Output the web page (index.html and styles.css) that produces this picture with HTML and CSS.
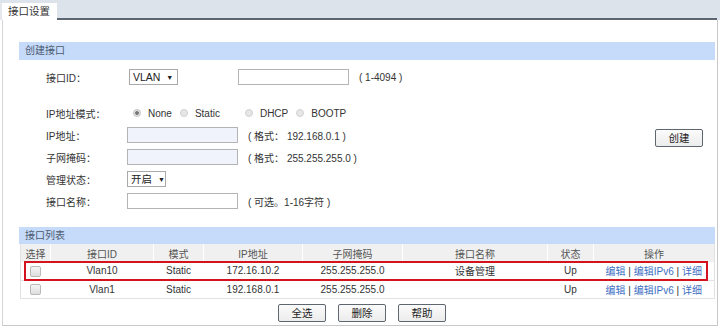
FILE: index.html
```html
<!DOCTYPE html>
<html lang="zh-CN">
<head>
  <meta charset="UTF-8" />
  <title>接口设置</title>
  <link rel="stylesheet" href="styles.css">
</head>
<body>
  <div class="tabbar">
    <div class="tab">接口设置</div>
    <div class="tab-rest"></div>
  </div>

  <div class="panel">
    <div class="section-title">创建接口</div>

    <div class="form">
      <div class="row row-first">
        <label class="label label-wide">接口ID：</label>
        <div class="select sel-vlan">VLAN <span class="arrow">▼</span></div>
        <input class="text text-id" type="text">
        <span class="hint">( 1-4094 )</span>
      </div>
      <div class="row">
        <label class="label">IP地址模式：</label>
        <div class="radios">
          <span class="radio checked"></span><span class="radio-text">None</span>
          <span class="radio"></span><span class="radio-text r-static">Static</span>
          <span class="radio"></span><span class="radio-text">DHCP</span>
          <span class="radio"></span><span class="radio-text">BOOTP</span>
        </div>
      </div>
      <div class="row">
        <label class="label">IP地址：</label>
        <input class="text text-fill" type="text">
        <span class="hint">( 格式： 192.168.0.1 )</span>
        <button class="btn btn-create">创建</button>
      </div>
      <div class="row">
        <label class="label">子网掩码：</label>
        <input class="text text-fill" type="text">
        <span class="hint">( 格式： 255.255.255.0 )</span>
      </div>
      <div class="row">
        <label class="label">管理状态：</label>
        <div class="select sel-state">开启 <span class="arrow">▼</span></div>
      </div>
      <div class="row">
        <label class="label">接口名称：</label>
        <input class="text" type="text">
        <span class="hint">( 可选。1-16字符 )</span>
      </div>
    </div>

    <div class="section-title section-list">接口列表</div>

    <div class="table-wrap">
      <table class="list">
        <thead>
          <tr>
            <th class="c-sel">选择</th>
            <th class="c-id">接口ID</th>
            <th class="c-mode">模式</th>
            <th class="c-ip">IP地址</th>
            <th class="c-mask">子网掩码</th>
            <th class="c-name">接口名称</th>
            <th class="c-state">状态</th>
            <th class="c-op">操作</th>
          </tr>
        </thead>
        <tbody>
          <tr>
            <td><span class="check"></span></td>
            <td>Vlan10</td>
            <td>Static</td>
            <td>172.16.10.2</td>
            <td>255.255.255.0</td>
            <td>设备管理</td>
            <td>Up</td>
            <td class="ops"><a href="#">编辑</a> | <a href="#">编辑IPv6</a> | <a href="#">详细</a></td>
          </tr>
          <tr>
            <td><span class="check"></span></td>
            <td>Vlan1</td>
            <td>Static</td>
            <td>192.168.0.1</td>
            <td>255.255.255.0</td>
            <td></td>
            <td>Up</td>
            <td class="ops"><a href="#">编辑</a> | <a href="#">编辑IPv6</a> | <a href="#">详细</a></td>
          </tr>
        </tbody>
      </table>
      <div class="highlight"></div>
    </div>

    <div class="actions">
      <button class="btn">全选</button>
      <button class="btn">删除</button>
      <button class="btn">帮助</button>
    </div>
  </div>
</body>
</html>
```

FILE: styles.css
```css
* { box-sizing: border-box; }
body {
  margin: 0;
  width: 720px;
  background: #fff;
  color: #333;
  font-family: "Liberation Sans", "Noto Sans CJK SC", sans-serif;
  font-size: 10px;
}
.tabbar {
  display: flex;
  align-items: flex-end;
  height: 20px;
  background: #dde3ea;
}
.tab {
  width: 57px;
  height: 17px;
  padding: 1px 0 0 6px;
  background: #fff;
  border-left: 2px solid #e4e8ec;
  font-size: 10.5px;
  line-height: 15px;
  color: #333;
}
.tab-rest {
  flex: 1;
  height: 2px;
  margin-right: 3px;
  background: #5b6670;
}
.panel {
  margin: 0 2px 0 2px;
  width: 716px;
  height: 306px;
  padding: 22px 2px 0 16px;
  border-left: 1px solid #d4d4d4;
  border-right: 1px solid #c8c8c8;
  border-bottom: 1px solid #c8c8c8;
}
.section-title {
  height: 18px;
  padding-left: 6px;
  background: #c6dafa;
  line-height: 18px;
  font-size: 10px;
  color: #4a5a70;
}
.form {
  padding-left: 27px;
  padding-right: 12px;
}
.row {
  display: flex;
  align-items: center;
  height: 22px;
}
.row-first {
  height: 16px;
  margin: 9px 0 17px;
}
.label {
  width: 81px;
  font-size: 10px;
  color: #333;
}
.label-wide { width: 83px; }
.select {
  height: 16px;
  padding: 0 0 0 3px;
  border: 1px solid #a9a9a9;
  background: #fff;
  line-height: 14px;
  font-size: 10.5px;
  color: #222;
  white-space: nowrap;
}
.arrow {
  font-size: 7px;
  margin-left: 3px;
  vertical-align: 1px;
}
.sel-vlan { width: 49px; }
.sel-state { width: 39px; }
.text {
  width: 111px;
  height: 16px;
  border: 1px solid #b4b4b4;
  background: #fff;
  padding: 0;
}
.text-id { margin-left: 60px; }
.text-fill { background: #f0f3fb; }
.hint {
  margin-left: 10px;
  font-size: 10px;
  color: #333;
  white-space: nowrap;
}
.radios {
  display: flex;
  align-items: center;
  padding-left: 6px;
}
.radio {
  width: 8px;
  height: 8px;
  border-radius: 50%;
  border: 1px solid #d2d2d2;
  background: #e6e6e6;
  margin-right: 7px;
}
.radio.checked {
  background: radial-gradient(circle, #777 0 1.5px, #e0e0e0 2.2px);
  border-color: #c4c4c4;
}
.radio-text {
  margin-right: 8px;
  font-size: 10px;
}
.r-static { margin-right: 25px; }
.btn {
  height: 18px;
  width: 48px;
  padding: 0;
  border: 1px solid #5e6770;
  border-radius: 2px;
  background: linear-gradient(#fbfbfb, #ececec);
  font-family: "Noto Sans CJK SC", sans-serif;
  font-size: 10.5px;
  color: #222;
  line-height: 16px;
}
.btn-create {
  margin-left: auto;
  margin-top: 6px;
}
.section-list { margin-top: 15px; height: 17px; line-height: 17px; }
.table-wrap {
  position: relative;
  margin-left: 1px;
}
.list {
  width: 100%;
  border-collapse: collapse;
  table-layout: fixed;
  border-left: 1px solid #e2e2e2;
  border-right: 1px solid #e2e2e2;
}
.list th {
  height: 18px;
  padding: 0;
  background: #f0f0f0;
  border-right: 1px solid #fff;
  font-weight: normal;
  color: #555;
  font-size: 10px;
}
.list th:last-child { border-right: none; }
.list td {
  height: 18px;
  padding: 0;
  text-align: center;
  border-bottom: 1px solid #e2e2e2;
  font-size: 10px;
  color: #333;
  white-space: nowrap;
}
.c-sel { width: 30px; }
.c-id { width: 103px; }
.c-mode { width: 50px; }
.c-ip { width: 99px; }
.c-mask { width: 100px; }
.c-name { width: 145px; }
.c-state { width: 46px; }
.check {
  display: inline-block;
  width: 11px;
  height: 11px;
  border: 1px solid #b9b9b9;
  border-radius: 2px;
  background: linear-gradient(#f4f4f4, #dedede);
  vertical-align: middle;
}
.ops a {
  color: #3d6fc4;
  text-decoration: none;
}
.ops { color: #3d6fc4; }
.highlight {
  position: absolute;
  left: 4px;
  top: 17px;
  width: 684px;
  height: 20px;
  border: 2px solid #d3141e;
}
.actions {
  display: flex;
  justify-content: center;
  gap: 12px;
  margin-top: 5px;
  padding-right: 10px;
}
```
